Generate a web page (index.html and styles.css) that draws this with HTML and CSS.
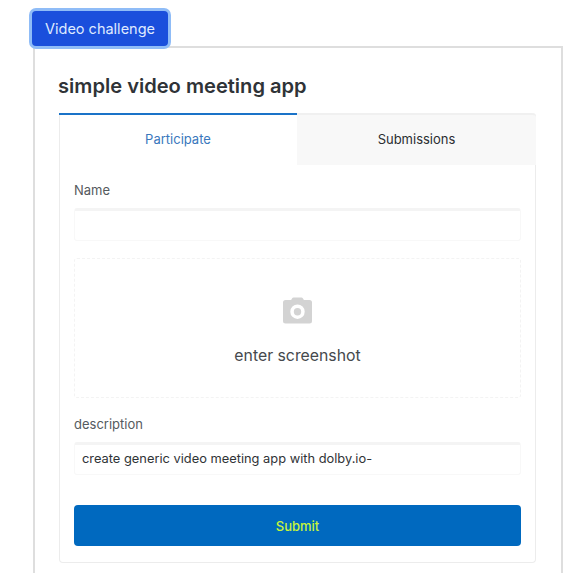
FILE: index.html
```html
<!DOCTYPE html>
<html lang="en">
<head>
<meta charset="utf-8">
<title>Video challenge</title>
<link rel="stylesheet" href="styles.css">
</head>
<body>
<main class="page">
  <button class="challenge-btn" type="button">Video challenge</button>
  <section class="outer-card">
    <h1 class="title">simple video meeting app</h1>
    <div class="inner-card">
      <div class="tabs">
        <div class="tab tab-active">Participate</div>
        <div class="tab tab-idle">Submissions</div>
      </div>
      <form class="form">
        <label class="label">Name</label>
        <div class="input"></div>
        <div class="dropzone">
          <svg class="camera" viewBox="0.5 0 29 27" width="29" height="27" aria-hidden="true">
            <path fill-rule="evenodd" fill="#d3d3d3" d="M11 0.5h8a1.500 1.500 0 0 1 1.300 .8L21.400 3H27a2.500 2.500 0 0 1 2.500 2.500V24a2.500 2.500 0 0 1-2.500 2.500H3A2.500 2.500 0 0 1 0.500 24V5.500A2.500 2.500 0 0 1 3 3H8.600L9.700 1.300A1.500 1.500 0 0 1 11 .5ZM15 7.500a7.200 7.200 0 1 0 0 14.400a7.200 7.200 0 0 0 0-14.400ZM15 11a3.700 3.700 0 1 1 0 7.400a3.700 3.700 0 0 1 0-7.400Z"/>
          </svg>
          <div class="drop-text">enter screenshot</div>
        </div>
        <label class="label label-desc">description</label>
        <div class="input input-filled">create generic video meeting app with dolby.io-</div>
        <button class="submit" type="button">Submit</button>
      </form>
    </div>
  </section>
</main>
</body>
</html>
```

FILE: styles.css
```css
html, body {
  margin: 0;
  padding: 0;
  height: 100%;
  overflow: hidden;
  background: #fff;
}
body {
  font-family: Inter, "Liberation Sans", sans-serif;
  color: #33373b;
}
.page {
  padding: 11px 0 0 32px;
  width: 532px;
}
.challenge-btn {
  display: block;
  position: relative;
  z-index: 1;
  width: 136px;
  height: 35px;
  padding: 0;
  border: 0;
  border-radius: 4px;
  background: #1a4fdc;
  box-shadow: 0 0 0 3px #8fbcf7;
  color: #dfeaff;
  font: 400 14.5px Inter, "Liberation Sans", sans-serif;
}
.outer-card {
  margin: 0 0 0 1px;
  height: 560px;
  padding: 26px 26px 0 24px;
  border-style: solid;
  border-width: 2px 2px 0 2px;
  border-color: #dedede;
  box-sizing: border-box;
  width: 530px;
}
.title {
  margin: 0 0 15px -1px;
  font-size: 20.1px;
  font-weight: 600;
  line-height: 24px;
  color: #2f3337;
}
.inner-card {
  width: 477px;
  height: 450px;
  box-sizing: border-box;
  border: 1px solid #ececec;
  border-top: 0;
  border-radius: 4px;
}
.tabs {
  display: flex;
  height: 52px;
  margin: 0 -1px;
}
.tab {
  flex: 1;
  display: flex;
  align-items: center;
  justify-content: center;
  padding-bottom: 2px;
  font-size: 13px;
  box-sizing: border-box;
}
.tab-active {
  flex: 0 0 238px;
  color: #3a78bd;
  border-top: 2px solid #1a73c8;
}
.tab-idle {
  color: #2b2e31;
  background: #f8f8f8;
  border-top: 2px solid #f0f0f0;
  border-top-right-radius: 4px;
}
.form {
  padding: 16px 14px 0;
}
.label {
  display: block;
  font-size: 13px;
  line-height: 18px;
  color: #555a5e;
  margin-bottom: 9px;
}
.input {
  height: 33px;
  box-sizing: border-box;
  border: 1px solid #f8f8f8;
  border-top: 3px solid #f4f4f4;
  border-radius: 3px;
  padding-left: 7px;
  font-size: 12.85px;
  line-height: 28px;
  color: #2f3336;
}
.dropzone {
  margin-top: 17px;
  height: 140px;
  box-sizing: border-box;
  border: 1px dashed #f3f3f3;
  border-radius: 3px;
  display: flex;
  flex-direction: column;
  align-items: center;
  padding-top: 38px;
}
.camera {
  display: block;
}
.drop-text {
  margin-top: 21px;
  font-size: 15.8px;
  line-height: 22px;
  color: #45494d;
}
.label-desc {
  margin-top: 17px;
}
.submit {
  display: block;
  width: 100%;
  height: 41px;
  margin-top: 30px;
  border: 0;
  border-radius: 4px;
  background: #0069bf;
  color: #c8f53a;
  font: 500 13px Inter, "Liberation Sans", sans-serif;
}
```
